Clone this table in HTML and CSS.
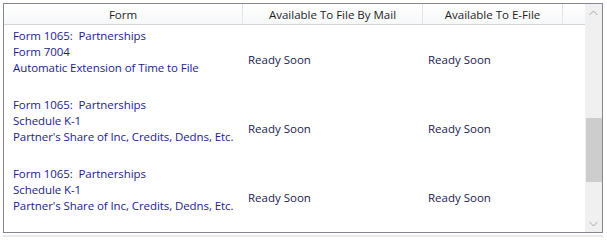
FILE: index.html
```html
<!DOCTYPE html>
<html lang="en">
<head>
    <meta charset="UTF-8">
    <title>Forms</title>
    <link rel="stylesheet" href="styles.css">
</head>
<body>
    <div class="grid-box">
        <div class="grid-main">
            <div class="header">
                <div class="hcell col-form">Form</div>
                <div class="hcell col-mail">Available To File By Mail</div>
                <div class="hcell col-efile">Available To E-File</div>
                <div class="hcell col-fill"></div>
            </div>
            <div class="rows">
                <div class="row">
                    <div class="cell col-form form-text">
                        <div>Form 1065:&nbsp; Partnerships</div>
                        <div>Form 7004</div>
                        <div>Automatic Extension of Time to File</div>
                    </div>
                    <div class="cell col-mail status">Ready Soon</div>
                    <div class="cell col-efile status">Ready Soon</div>
                </div>
                <div class="row">
                    <div class="cell col-form form-text">
                        <div>Form 1065:&nbsp; Partnerships</div>
                        <div>Schedule K-1</div>
                        <div>Partner's Share of Inc, Credits, Dedns, Etc.</div>
                    </div>
                    <div class="cell col-mail status">Ready Soon</div>
                    <div class="cell col-efile status">Ready Soon</div>
                </div>
                <div class="row">
                    <div class="cell col-form form-text">
                        <div>Form 1065:&nbsp; Partnerships</div>
                        <div>Schedule K-1</div>
                        <div>Partner's Share of Inc, Credits, Dedns, Etc.</div>
                    </div>
                    <div class="cell col-mail status">Ready Soon</div>
                    <div class="cell col-efile status">Ready Soon</div>
                </div>
            </div>
        </div>
        <div class="scrollbar">
            <div class="arrow">
                <svg width="9" height="6" viewBox="0 0 9 6"><path d="M0.5 5 L4.5 1 L8.5 5" fill="none" stroke="#a6a6a6" stroke-width="1"/></svg>
            </div>
            <div class="track">
                <div class="thumb"></div>
            </div>
            <div class="arrow">
                <svg width="9" height="6" viewBox="0 0 9 6"><path d="M0.5 1 L4.5 5 L8.5 1" fill="none" stroke="#a6a6a6" stroke-width="1"/></svg>
            </div>
        </div>
    </div>
    <div class="under-line"></div>
</body>
</html>
```

FILE: styles.css
```css
body {
    margin: 0;
    padding: 3px 0 0 3px;
    background: #ffffff;
    font-family: "Open Sans", "Noto Sans", sans-serif;
    font-size: 11.5px;
}
.grid-box {
    width: 598px;
    height: 228px;
    border: 1px solid #828790;
    display: flex;
    overflow: hidden;
}
.grid-main {
    flex: 1;
    display: flex;
    flex-direction: column;
    overflow: hidden;
}
.header {
    display: flex;
    height: 20px;
    border-bottom: 1px solid #d5d5d5;
    background: linear-gradient(#ffffff, #f7f8f9);
}
.hcell {
    display: flex;
    align-items: center;
    justify-content: center;
    border-right: 1px solid #e3e5e8;
    color: #1e1e1e;
    box-sizing: border-box;
}
.col-form {
    width: 239px;
}
.col-mail {
    width: 180px;
}
.col-efile {
    width: 140px;
}
.col-fill {
    width: 21px;
    border-right: none;
}
.row {
    display: flex;
    height: 69px;
}
.cell {
    box-sizing: border-box;
}
.form-text {
    padding: 3px 0 0 9px;
    color: #1c1c8a;
    line-height: 16px;
    letter-spacing: -0.08px;
}
.status {
    display: flex;
    align-items: center;
    padding-left: 5px;
    color: #1a1a50;
}
.scrollbar {
    width: 17px;
    background: #f0f0f0;
    display: flex;
    flex-direction: column;
}
.arrow {
    height: 17px;
    display: flex;
    align-items: center;
    justify-content: center;
}
.track {
    flex: 1;
    position: relative;
}
.thumb {
    position: absolute;
    left: 1px;
    right: 0;
    top: 97px;
    height: 64px;
    background: #cdcdcd;
}
.under-line {
    margin-top: 2px;
    width: 600px;
    height: 2px;
    background: #e8e8e8;
}
```
